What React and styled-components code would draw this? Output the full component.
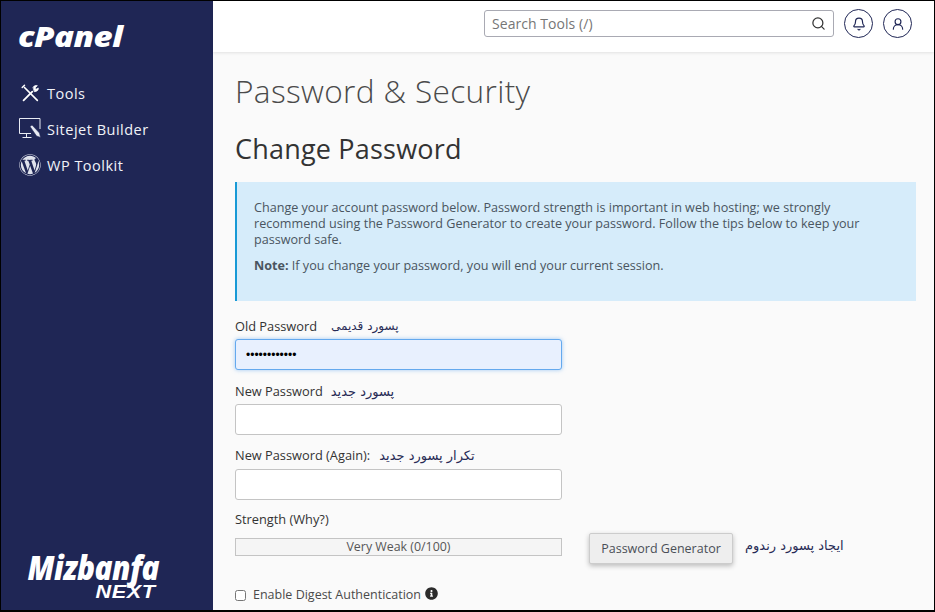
import React from 'react'
import styled, { createGlobalStyle } from 'styled-components'
import { Search, Bell, UserRound } from 'lucide-react'
import { FaInfoCircle, FaWordpress } from 'react-icons/fa'

const GlobalStyle = createGlobalStyle`
    html, body {
        margin: 0;
        padding: 0;
        height: 100%;
        overflow: hidden;
        background: #fafafa;
        font-family: "Open Sans", "Noto Sans", sans-serif;
    }
`
const Frame = styled.div`
    box-sizing: border-box;
    width: 935px;
    height: 612px;
    border: 1px solid #000;
    border-width: 1px 1px 2px 1px;
    display: flex;
    overflow: hidden;
`
const Sidebar = styled.aside`
    width: 212px;
    flex: none;
    background: #1f2655;
    color: #fff;
    display: flex;
    flex-direction: column;
    padding: 19px 0 0 18px;
    box-sizing: border-box;
`
const Logo = styled.div`
    font-family: "Open Sans", sans-serif;
    font-style: italic;
    font-weight: 800;
    font-size: 29px;
    line-height: 32px;
    letter-spacing: -0.5px;
    height: 32px;
    margin: 0 0 30px -1px;
    transform: scaleX(1.14);
    transform-origin: left center;
`
const Nav = styled.nav`
    display: flex;
    flex-direction: column;
    gap: 14px;
`
const NavItem = styled.a`
    display: flex;
    align-items: center;
    gap: 6px;
    height: 22px;
    font-size: 14.5px;
    letter-spacing: 0.5px;
    color: #f1f3f8;
`
const NavIcon = styled.svg`
    width: 22px;
    height: 22px;
    flex: none;
`
const Brand = styled.div`
    margin-top: auto;
    margin-bottom: 10px;
    width: 140px;
    display: flex;
    flex-direction: column;
    align-items: flex-end;
    font-style: italic;
    font-weight: 800;
    font-family: "Open Sans", sans-serif;
`
const BrandName = styled.span`
    font-size: 33px;
    line-height: 27px;
    letter-spacing: -0.6px;
    margin-bottom: 3px;
    transform: scaleX(0.9);
    transform-origin: right center;
`
const BrandTag = styled.span`
    font-family: "Liberation Sans", sans-serif;
    font-weight: 700;
    font-size: 19px;
    line-height: 16px;
    margin-right: 3px;
    letter-spacing: 0.5px;
    transform: scaleX(1.14);
    transform-origin: right center;
`
const Main = styled.main`
    flex: 1;
    min-width: 0;
    display: flex;
    flex-direction: column;
`
const TopBar = styled.header`
    height: 51px;
    flex: none;
    background: #fff;
    box-shadow: 0 1px 3px rgba(0, 0, 0, 0.1);
    display: flex;
    align-items: center;
    justify-content: flex-end;
    gap: 10px;
    padding: 0 22px 6px 0;
    box-sizing: border-box;
`
const SearchBox = styled.div`
    width: 350px;
    height: 27px;
    box-sizing: border-box;
    border: 1px solid #a9aab3;
    border-radius: 3px;
    background: #fff;
    display: flex;
    align-items: center;
    justify-content: space-between;
    padding: 0 7px;
    font-size: 14px;
    letter-spacing: 0.05px;
    color: #767676;
`
const RoundButton = styled.button`
    width: 29px;
    height: 29px;
    padding: 0;
    border: 1px solid #1f2655;
    border-radius: 50%;
    background: #fff;
    color: #1f2655;
    display: flex;
    align-items: center;
    justify-content: center;
`
const Content = styled.div`
    flex: 1;
    padding: 0 18px 0 22px;
    color: #333;
`
const PageTitle = styled.h1`
    margin: 17px 0 0;
    font-size: 31.6px;
    line-height: 44px;
    font-weight: 300;
    color: #4a4a4a;
    letter-spacing: 0.35px;
`
const SectionTitle = styled.h2`
    margin: 17px 0 0;
    font-size: 27px;
    line-height: 38px;
    font-weight: 500;
    color: #333;
    letter-spacing: 0.2px;
`
const Notice = styled.div`
    margin-top: 14px;
    height: 119px;
    box-sizing: border-box;
    background: #d6ecfa;
    border-left: 2px solid #189ad6;
    padding: 18px 17px 0;
    font-size: 12.6px;
    line-height: 16px;
    color: #4a5560;
`
const NoticeText = styled.p`
    margin: 0 0 10px;
`
const Field = styled.div`
    width: 327px;
    margin-top: ${p => p.$top || 0}px;
`
const Label = styled.label`
    display: flex;
    align-items: center;
    gap: ${p => p.$gap || 14}px;
    height: 20px;
    font-size: 12.8px;
    font-weight: 500;
    color: #333;
    margin-bottom: ${p => p.$bottom ?? 3}px;
`
const Farsi = styled.span`
    font-family: "DejaVu Sans", sans-serif;
    font-size: ${p => p.$size || 13}px;
    font-weight: 400;
    color: #272a55;
    direction: rtl;
`
const Input = styled.input`
    display: block;
    box-sizing: border-box;
    width: 100%;
    height: 31px;
    padding: 0 10px;
    border: 1px solid ${p => (p.$active ? '#64a9ee' : '#c4c4c4')};
    border-radius: 3px;
    background: ${p => (p.$active ? '#e8f0fe' : '#fff')};
    box-shadow: ${p => (p.$active ? '0 0 4px rgba(100, 169, 238, 0.6)' : 'none')};
    font-size: 12px;
    outline: none;
`
const StrengthRow = styled.div`
    display: flex;
    align-items: flex-start;
    margin-top: 9px;
`
const Meter = styled.div`
    width: 327px;
    height: 18px;
    box-sizing: border-box;
    border: 1px solid #c4c4c4;
    background: #f5f5f5;
    text-align: center;
    font-size: 12.4px;
    line-height: 15px;
    color: #555;
`
const GenButton = styled.button`
    margin-left: 27px;
    margin-top: -5px;
    width: 144px;
    height: 31px;
    border: 1px solid #ccc;
    border-radius: 2px;
    background: #eee;
    box-shadow: 0 2px 5px rgba(0, 0, 0, 0.25);
    font-family: inherit;
    font-size: 12.5px;
    color: #4a4f57;
`
const GenNote = styled(Farsi)`
    margin-left: 12px;
    margin-top: 0;
`
const CheckRow = styled.label`
    display: flex;
    align-items: center;
    gap: 7px;
    margin-top: 22px;
    font-size: 12.5px;
    color: #4a4a4a;
`
const Check = styled.input`
    margin: 2px 0 0;
    width: 11px;
    height: 11px;
    flex: none;
`
const InfoBadge = styled(FaInfoCircle)`
    margin-left: -3px;
    margin-top: -3px;
    color: #2b2b2b;
    font-size: 13px;
`
const WpIcon = styled(FaWordpress)`
    width: 22px;
    height: 22px;
    flex: none;
    color: #dfe2ec;
`

const ToolsIcon = () => (
    <NavIcon viewBox="0 0 24 24" fill="none" stroke="#fff" strokeWidth="2" strokeLinecap="round">
        <path d="M5 20L14.500 10.500" />
        <path d="M15.500 5.500c1-1.500 3-2 4.500-1.500l-2.500 2.500 1 1.500 2.500-1.500c.5 2-1 4-4 4z" fill="#fff" strokeWidth="0.8" />
        <path d="M6 6l14 14" strokeWidth="1.800" />
        <path d="M3.500 6l2.500-2.500" strokeWidth="1.600" />
    </NavIcon>
)
const SitejetIcon = () => (
    <NavIcon viewBox="0 0 22 22" fill="none" stroke="#e8ebf3" strokeWidth="1">
        <path d="M12 15.500H.5V.5h20.500V11" />
        <path d="M3.500 19.500h9M7.500 15.500v4" />
        <path d="M11 8.500l2-1.500 7.500 8 1 4.500-4-1.500z" fill="#e8ebf3" stroke="#1f2655" strokeWidth="0.6" />
    </NavIcon>
)

const App = () => {
    return (
        <Frame>
            <GlobalStyle />
            <Sidebar>
                <Logo>cPanel</Logo>
                <Nav>
                    <NavItem><ToolsIcon />Tools</NavItem>
                    <NavItem><SitejetIcon />Sitejet Builder</NavItem>
                    <NavItem><WpIcon />WP Toolkit</NavItem>
                </Nav>
                <Brand>
                    <BrandName>Mizbanfa</BrandName>
                    <BrandTag>NEXT</BrandTag>
                </Brand>
            </Sidebar>
            <Main>
                <TopBar>
                    <SearchBox>
                        Search Tools (/)
                        <Search size={15} color="#333" />
                    </SearchBox>
                    <RoundButton><Bell size={14} /></RoundButton>
                    <RoundButton><UserRound size={14} /></RoundButton>
                </TopBar>
                <Content>
                    <PageTitle>Password &amp; Security</PageTitle>
                    <SectionTitle>Change Password</SectionTitle>
                    <Notice>
                        <NoticeText>
                            Change your account password below. Password strength is important in web hosting; we strongly recommend using the Password Generator to create your password. Follow the tips below to keep your password safe.
                        </NoticeText>
                        <NoticeText><b>Note:</b> If you change your password, you will end your current session.</NoticeText>
                    </Notice>
                    <Field $top={15}>
                        <Label>Old Password <Farsi $size={12}>پسورد قدیمی</Farsi></Label>
                        <Input $active type="password" defaultValue="............" />
                    </Field>
                    <Field $top={11}>
                        <Label $gap={8}>New Password <Farsi>پسورد جدید</Farsi></Label>
                        <Input type="password" />
                    </Field>
                    <Field $top={10}>
                        <Label $gap={9} $bottom={4}>New Password (Again): <Farsi>تکرار پسورد جدید</Farsi></Label>
                        <Input type="password" />
                    </Field>
                    <Field $top={9}>
                        <Label $bottom={0}>Strength (Why?)</Label>
                    </Field>
                    <StrengthRow>
                        <Meter>Very Weak (0/100)</Meter>
                        <GenButton>Password Generator</GenButton>
                        <GenNote>ایجاد پسورد رندوم</GenNote>
                    </StrengthRow>
                    <CheckRow>
                        <Check type="checkbox" />
                        Enable Digest Authentication
                        <InfoBadge />
                    </CheckRow>
                </Content>
            </Main>
        </Frame>
    )
}

export default App
